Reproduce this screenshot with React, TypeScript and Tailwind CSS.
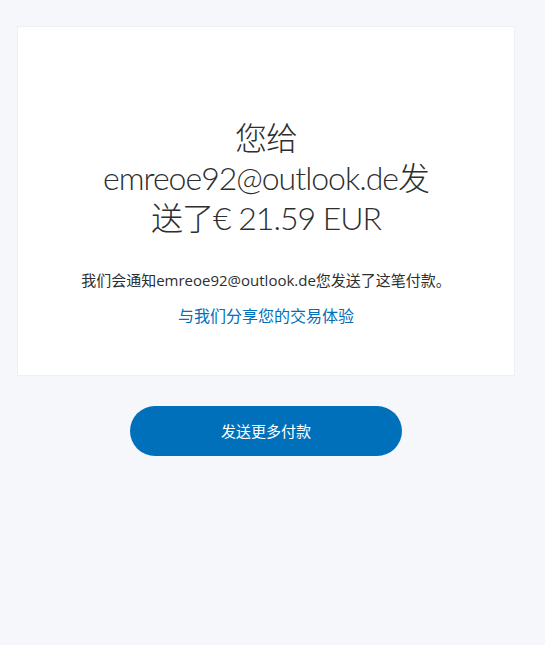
export default function App() {
  const font = {
    fontFamily: '"Open Sans", "Noto Sans CJK SC", sans-serif',
  }

  return (
    <div className="min-h-[645px] w-full bg-[#f5f7fa] px-[17px] pt-[26px]" style={font}>
      {/* Confirmation card */}
      <section className="w-[498px] h-[350px] bg-white border border-[#eef0f3] flex flex-col items-center">
        <h1
          className="mt-[91px] max-w-[350px] text-center text-[32px] leading-[40px] font-light tracking-[-1px] text-[#2c2e2f]"
          style={{ fontFamily: 'Lato, "Noto Sans CJK SC", sans-serif' }}
        >
          您给emreoe92@outlook.de发送了€ 21.59 EUR
        </h1>
        <p className="mt-[31px] text-[15px] leading-[22px] text-[#2c2e2f]">
          我们会通知emreoe92@outlook.de您发送了这笔付款。
        </p>
        <a href="#" className="mt-[14px] text-[16px] leading-[22px] text-[#0070ba]">
          与我们分享您的交易体验
        </a>
      </section>

      {/* Send more */}
      <div className="w-[498px] flex justify-center mt-[30px]">
        <button className="w-[272px] h-[50px] rounded-full bg-[#0070ba] text-white text-[15px]">
          发送更多付款
        </button>
      </div>
    </div>
  )
}
